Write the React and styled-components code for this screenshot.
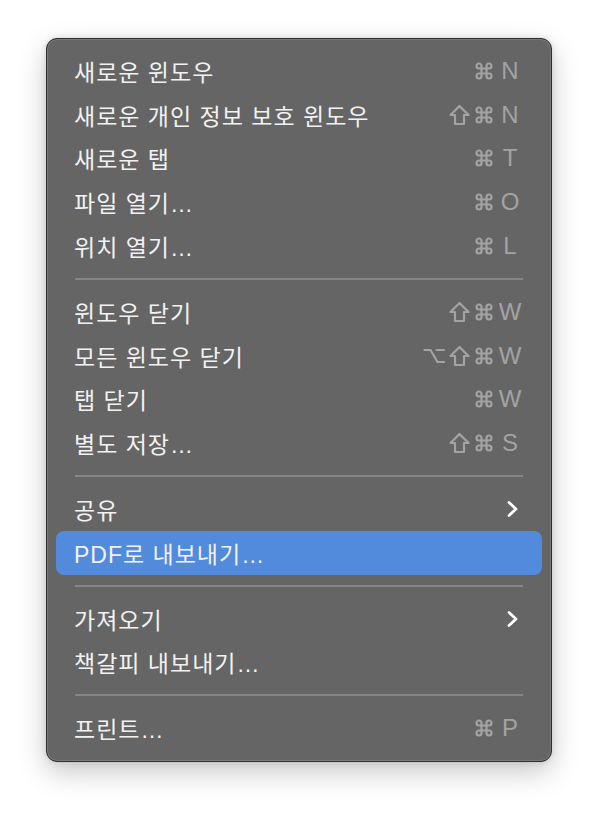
import React from "react";
import styled, { createGlobalStyle } from "styled-components";

const GlobalStyle = createGlobalStyle`
  html, body {
    margin: 0;
    padding: 0;
    background: #ffffff;
  }
  body {
    font-family: "Liberation Sans", "Noto Sans CJK KR", sans-serif;
  }
`;

const Page = styled.div`
  width: 598px;
  height: 816px;
  padding: 38px 0 0 46px;
  box-sizing: border-box;
`;

const Menu = styled.div`
  width: 506px;
  height: 724px;
  box-sizing: border-box;
  background: #656565;
  border: 1px solid #2e2e2e;
  border-radius: 11px;
  box-shadow: inset 0 0 0 1px #7a7a7a, 0 10px 28px rgba(0, 0, 0, 0.22),
    0 0 6px rgba(0, 0, 0, 0.12);
  padding: 10px 9px;
  display: flex;
  flex-direction: column;
`;

const Row = styled.div`
  height: 43.8px;
  flex-shrink: 0;
  display: flex;
  align-items: center;
  padding: 0 19px 0 18px;
  border-radius: 8px;
  background: ${(p) => (p.$active ? "#528bdb" : "transparent")};
  color: #f2f2f2;
  font-size: 23px;
  font-family: "Liberation Sans", "Noto Sans CJK KR", sans-serif;
`;

const Label = styled.span`
  flex: 1;
  white-space: nowrap;
  letter-spacing: 1px;
`;

const Shortcut = styled.span`
  display: flex;
  align-items: center;
  gap: 4px;
  color: #a3a3a3;
`;

const Key = styled.span`
  width: 26px;
  margin-left: -1px;
  text-align: center;
  font-size: 24px;
  font-family: "Liberation Sans", sans-serif;
`;

const Separator = styled.div`
  height: 22px;
  flex-shrink: 0;
  display: flex;
  align-items: center;
  padding: 0 19px;
  &::after {
    content: "";
    flex: 1;
    height: 2px;
    background: #858585;
  }
`;

const stroke = {
  fill: "none",
  stroke: "#a3a3a3",
  strokeWidth: 2.2,
  strokeLinecap: "round",
  strokeLinejoin: "round",
};

const CmdIcon = () => (
  <svg width="20" height="20" viewBox="0 0 20 20">
    <path
      {...stroke}
      d="M7.5 12.5 V5 A2.5 2.5 0 1 0 5 7.5 H15 A2.5 2.5 0 1 0 12.5 5 V15 A2.5 2.5 0 1 0 15 12.5 H5 A2.5 2.5 0 1 0 7.5 15 V12.5"
    />
  </svg>
);

const ShiftIcon = () => (
  <svg width="21" height="22" viewBox="0 0 21 22">
    <path {...stroke} d="M10.5 2 L19.5 11 H15 V20 H6 V11 H1.5 Z" />
  </svg>
);

const OptIcon = () => (
  <svg width="22" height="16" viewBox="0 0 22 16">
    <path {...stroke} d="M1.5 2 H7.5 L14.5 14 H21" />
    <path {...stroke} d="M13.5 2 H21" />
  </svg>
);

const modIcons = { cmd: CmdIcon, shift: ShiftIcon, opt: OptIcon };

const Chevron = () => (
  <svg width="14" height="18" viewBox="0 0 14 18" style={{ marginRight: 3 }}>
    <path
      d="M3 2.5 L10 9 L3 15.5"
      fill="none"
      stroke="#ffffff"
      strokeWidth="2.8"
      strokeLinecap="round"
      strokeLinejoin="round"
    />
  </svg>
);

const sections = [
  [
    { label: "새로운 윈도우", mods: ["cmd"], key: "N" },
    { label: "새로운 개인 정보 보호 윈도우", mods: ["shift", "cmd"], key: "N" },
    { label: "새로운 탭", mods: ["cmd"], key: "T" },
    { label: "파일 열기…", mods: ["cmd"], key: "O" },
    { label: "위치 열기…", mods: ["cmd"], key: "L" },
  ],
  [
    { label: "윈도우 닫기", mods: ["shift", "cmd"], key: "W" },
    { label: "모든 윈도우 닫기", mods: ["opt", "shift", "cmd"], key: "W" },
    { label: "탭 닫기", mods: ["cmd"], key: "W" },
    { label: "별도 저장…", mods: ["shift", "cmd"], key: "S" },
  ],
  [
    { label: "공유", sub: true },
    { label: "PDF로 내보내기…", active: true },
  ],
  [
    { label: "가져오기", sub: true },
    { label: "책갈피 내보내기…" },
  ],
  [{ label: "프린트…", mods: ["cmd"], key: "P" }],
];

const MenuItem = ({ item }) => (
  <Row $active={item.active}>
    <Label>{item.label}</Label>
    {item.sub && <Chevron />}
    {item.key && (
      <Shortcut>
        {item.mods.map((m) => {
          const Icon = modIcons[m];
          return <Icon key={m} />;
        })}
        <Key>{item.key}</Key>
      </Shortcut>
    )}
  </Row>
);

const App = () => (
  <Page>
    <GlobalStyle />
    <Menu>
      {sections.map((section, si) => (
        <React.Fragment key={si}>
          {si > 0 && <Separator />}
          {section.map((item, ii) => (
            <MenuItem key={ii} item={item} />
          ))}
        </React.Fragment>
      ))}
    </Menu>
  </Page>
);

export default App;
